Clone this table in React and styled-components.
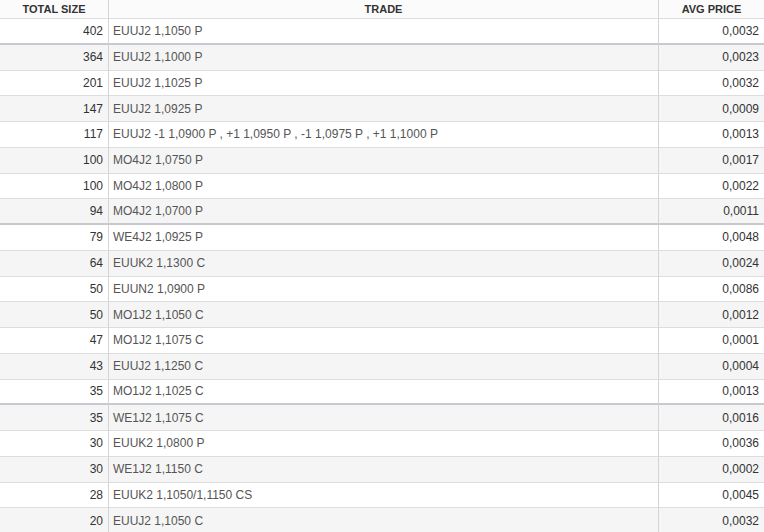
import React from "react";
import styled, { createGlobalStyle } from "styled-components";

const Global = createGlobalStyle`
  html, body { margin: 0; padding: 0; background: #fff; }
  body { font-family: "Liberation Sans", Arial, sans-serif; }
`;

const Grid = styled.div`
  display: grid;
  grid-template-columns: 108px 550px 1fr;
  width: 764px;
  font-size: 12px;
`;

const Head = styled.div`
  height: 19px;
  box-sizing: border-box;
  border-bottom: 1px solid #dddddd;
  border-left: ${(p) => (p.$first ? "none" : "1px solid #d4d4d4")};
  background: #fbfbfb;
  color: #333;
  font-weight: bold;
  font-size: 11px;
  display: flex;
  align-items: center;
  justify-content: center;
  padding-bottom: 1px;
`;

const Cell = styled.div`
  height: 25.75px;
  box-sizing: border-box;
  border-bottom: ${(p) => (p.$groupEnd ? "2px solid #c8c8d0" : "1px solid #dddddd")};
  border-left: ${(p) => (p.$first ? "none" : "1px solid #d4d4d4")};
  background: ${(p) => (p.$alt ? "#f5f5f5" : "#ffffff")};
  color: ${(p) => (p.$muted ? "#555" : "#333")};
  display: flex;
  align-items: center;
  justify-content: ${(p) => (p.$align === "right" ? "flex-end" : "flex-start")};
  padding: 0 ${(p) => (p.$align === "right" ? "5px" : "0")} 0 ${(p) => (p.$align === "right" ? "0" : "4px")};
  white-space: nowrap;
  overflow: hidden;
`;

const rows = [
  [402, "EUUJ2 1,1050 P", "0,0032", true],
  [364, "EUUJ2 1,1000 P", "0,0023"],
  [201, "EUUJ2 1,1025 P", "0,0032"],
  [147, "EUUJ2 1,0925 P", "0,0009"],
  [117, "EUUJ2 -1 1,0900 P , +1 1,0950 P , -1 1,0975 P , +1 1,1000 P", "0,0013"],
  [100, "MO4J2 1,0750 P", "0,0017"],
  [100, "MO4J2 1,0800 P", "0,0022"],
  [94, "MO4J2 1,0700 P", "0,0011", true],
  [79, "WE4J2 1,0925 P", "0,0048"],
  [64, "EUUK2 1,1300 C", "0,0024"],
  [50, "EUUN2 1,0900 P", "0,0086"],
  [50, "MO1J2 1,1050 C", "0,0012"],
  [47, "MO1J2 1,1075 C", "0,0001"],
  [43, "EUUJ2 1,1250 C", "0,0004"],
  [35, "MO1J2 1,1025 C", "0,0013", true],
  [35, "WE1J2 1,1075 C", "0,0016"],
  [30, "EUUK2 1,0800 P", "0,0036"],
  [30, "WE1J2 1,1150 C", "0,0002"],
  [28, "EUUK2 1,1050/1,1150 CS", "0,0045"],
  [20, "EUUJ2 1,1050 C", "0,0032"],
];

export default function App() {
  return (
    <>
      <Global />
      <Grid>
        <Head $first>TOTAL SIZE</Head>
        <Head>TRADE</Head>
        <Head>AVG PRICE</Head>
        {rows.map(([size, trade, price, groupEnd], i) => {
          const alt = i % 2 === 1;
          return (
            <React.Fragment key={i}>
              <Cell $first $align="right" $alt={alt} $groupEnd={groupEnd}>{size}</Cell>
              <Cell $alt={alt} $groupEnd={groupEnd} $muted>{trade}</Cell>
              <Cell $align="right" $alt={alt} $groupEnd={groupEnd}>{price}</Cell>
            </React.Fragment>
          );
        })}
      </Grid>
    </>
  );
}
